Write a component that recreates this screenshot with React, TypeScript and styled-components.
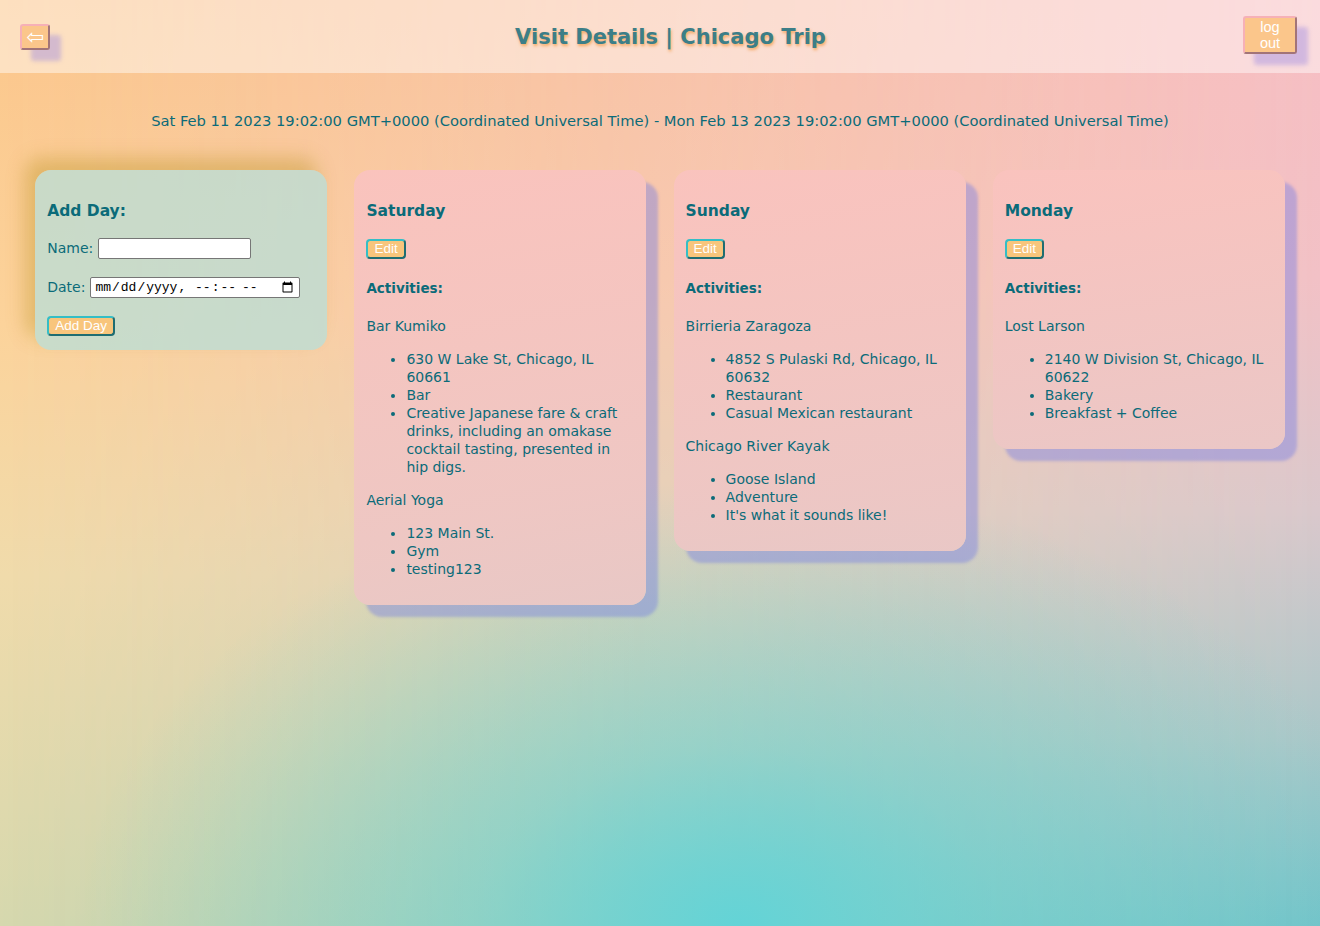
import React from "react";
import styled, { createGlobalStyle } from "styled-components";

const GlobalStyle = createGlobalStyle`
  html, body {
    margin: 0;
    padding: 0;
  }
  body {
    font-family: "DejaVu Sans", "Noto Sans", sans-serif;
    color: #0b6b79;
  }
  * { box-sizing: border-box; }
`;

const Page = styled.div`
  position: relative;
  min-height: 100vh;
  overflow: hidden;
  background: linear-gradient(
    to bottom,
    #fbc68b 0%,
    #fcd39b 35%,
    #f0dbab 62%,
    #d6d8ae 100%
  );

  &::before {
    content: "";
    position: absolute;
    inset: 0;
    background: linear-gradient(
      to bottom,
      #f7bec3 0%,
      #f2c1c6 30%,
      #dac8cc 55%,
      #aac7c8 80%,
      #74c3c8 100%
    );
    -webkit-mask-image: linear-gradient(to right, transparent 0%, black 100%);
    mask-image: linear-gradient(to right, transparent 0%, black 100%);
  }

  &::after {
    content: "";
    position: absolute;
    inset: 0;
    background: radial-gradient(
      ellipse 50% 48% at 56% 100%,
      rgba(96, 212, 216, 0.95) 0%,
      rgba(96, 212, 216, 0.45) 40%,
      rgba(96, 212, 216, 0) 100%
    );
  }

  & > * {
    position: relative;
    z-index: 1;
  }
`;

const Header = styled.header`
  height: 73px;
  display: grid;
  grid-template-columns: 1fr auto 1fr;
  align-items: center;
  padding: 0 23px 0 20px;
  background: rgba(255, 255, 255, 0.45);
`;

const Title = styled.h1`
  margin: 0 0 0 24px;
  font-size: 21px;
  font-weight: bold;
  line-height: 26px;
  color: #3c7e88;
  text-shadow: 1px 2px 3px rgba(243, 160, 80, 0.85);
`;

const NavButton = styled.button<{ $side: "left" | "right" }>`
  justify-self: ${(p) => (p.$side === "left" ? "start" : "end")};
  background: #fbc68b;
  border: 2px outset #f6b0b7;
  border-radius: 3px;
  color: #ffffff;
  box-shadow: 11px 11px 4px rgba(150, 130, 225, 0.4);
  cursor: pointer;
`;

const BackButton = styled(NavButton)`
  width: 30px;
  height: 26px;
  padding: 0;
  margin-top: 1px;
  font-family: "DejaVu Sans", sans-serif;
  font-size: 21px;
  line-height: 20px;
`;

const LogoutButton = styled(NavButton)`
  width: 54px;
  height: 38px;
  padding: 0 6px;
  margin-top: -3px;
  font-family: "Liberation Sans", Arial, sans-serif;
  font-size: 14.5px;
  line-height: 16px;
`;

const DateRange = styled.p`
  margin: 39px 0 41px;
  text-align: center;
  font-size: 14.7px;
  line-height: 17px;
`;

const CardRow = styled.main`
  display: flex;
  justify-content: space-evenly;
  align-items: flex-start;
  padding: 0 8px;
`;

const Card = styled.section<{ $variant: "form" | "day" }>`
  width: 292px;
  padding: 12px 12px ${(p) => (p.$variant === "form" ? "14px" : "12px")};
  border-radius: 16px;
  background: ${(p) =>
    p.$variant === "form"
      ? "rgba(180, 224, 221, 0.7)"
      : "linear-gradient(172deg, rgba(250, 195, 190, 0.96) 0%, rgba(235, 199, 198, 0.93) 100%)"};
  box-shadow: ${(p) =>
    p.$variant === "form"
      ? "-10px -12px 18px rgba(190, 150, 40, 0.42)"
      : "12px 12px 3px rgba(110, 120, 230, 0.4)"};
`;

const CardTitle = styled.h3<{ $after: number }>`
  margin: 20px 0 ${(p) => p.$after}px;
  font-size: 15.5px;
  line-height: 19px;
  font-weight: bold;
`;

const Form = styled.form`
  display: flex;
  flex-direction: column;
  align-items: flex-start;
  gap: 18px;
`;

const FieldRow = styled.label`
  display: flex;
  align-items: center;
  gap: 5px;
  font-size: 14px;
  line-height: 21px;
`;

const TextInput = styled.input<{ $width: number }>`
  width: ${(p) => p.$width}px;
  height: 21px;
  padding: 1px 3px;
  border: 1px solid #767676;
  border-radius: 2px;
  background: #ffffff;
  font-family: "Liberation Mono", monospace;
  font-size: 13px;
  color: #000000;
`;

const SmallButton = styled.button`
  display: block;
  padding: 1px 6px;
  border: 2px outset #34bec6;
  border-radius: 4px;
  background: #f8c57c;
  color: #ffffff;
  font-family: "Liberation Sans", Arial, sans-serif;
  font-size: 13.5px;
  line-height: 14px;
  cursor: pointer;
`;

const SectionLabel = styled.h4`
  margin: 21px 0 20px;
  font-size: 13.5px;
  line-height: 17px;
  font-weight: bold;
`;

const ActivityName = styled.p`
  margin: 0;
  font-size: 14px;
  line-height: 18px;
`;

const DetailList = styled.ul`
  margin: 15px 0;
  padding-left: 40px;
  list-style: disc;
  font-size: 14px;
  line-height: 18px;
`;

type Activity = { name: string; details: string[] };
type Day = { name: string; activities: Activity[] };

const days: Day[] = [
  {
    name: "Saturday",
    activities: [
      {
        name: "Bar Kumiko",
        details: [
          "630 W Lake St, Chicago, IL 60661",
          "Bar",
          "Creative Japanese fare & craft drinks, including an omakase cocktail tasting, presented in hip digs.",
        ],
      },
      { name: "Aerial Yoga", details: ["123 Main St.", "Gym", "testing123"] },
    ],
  },
  {
    name: "Sunday",
    activities: [
      {
        name: "Birrieria Zaragoza",
        details: ["4852 S Pulaski Rd, Chicago, IL 60632", "Restaurant", "Casual Mexican restaurant"],
      },
      {
        name: "Chicago River Kayak",
        details: ["Goose Island", "Adventure", "It's what it sounds like!"],
      },
    ],
  },
  {
    name: "Monday",
    activities: [
      {
        name: "Lost Larson",
        details: ["2140 W Division St, Chicago, IL 60622", "Bakery", "Breakfast + Coffee"],
      },
    ],
  },
];

function DayCard({ day }: { day: Day }) {
  return (
    <Card $variant="day">
      <CardTitle $after={18}>{day.name}</CardTitle>
      <SmallButton type="button">Edit</SmallButton>
      <SectionLabel>Activities:</SectionLabel>
      {day.activities.map((a) => (
        <React.Fragment key={a.name}>
          <ActivityName>{a.name}</ActivityName>
          <DetailList>
            {a.details.map((d) => (
              <li key={d}>{d}</li>
            ))}
          </DetailList>
        </React.Fragment>
      ))}
    </Card>
  );
}

export default function App() {
  return (
    <>
      <GlobalStyle />
      <Page>
        <Header>
          <BackButton type="button" $side="left" aria-label="back">
            ⇦
          </BackButton>
          <Title>Visit Details | Chicago Trip</Title>
          <LogoutButton type="button" $side="right">
            log out
          </LogoutButton>
        </Header>
        <DateRange>
          Sat Feb 11 2023 19:02:00 GMT+0000 (Coordinated Universal Time) - Mon Feb 13 2023 19:02:00
          GMT+0000 (Coordinated Universal Time)
        </DateRange>
        <CardRow>
          <Card $variant="form">
            <CardTitle $after={17}>Add Day:</CardTitle>
            <Form onSubmit={(e) => e.preventDefault()}>
              <FieldRow>
                Name:
                <TextInput type="text" $width={153} />
              </FieldRow>
              <FieldRow>
                Date:
                <TextInput type="datetime-local" $width={210} />
              </FieldRow>
              <SmallButton type="submit">Add Day</SmallButton>
            </Form>
          </Card>
          {days.map((d) => (
            <DayCard key={d.name} day={d} />
          ))}
        </CardRow>
      </Page>
    </>
  );
}
